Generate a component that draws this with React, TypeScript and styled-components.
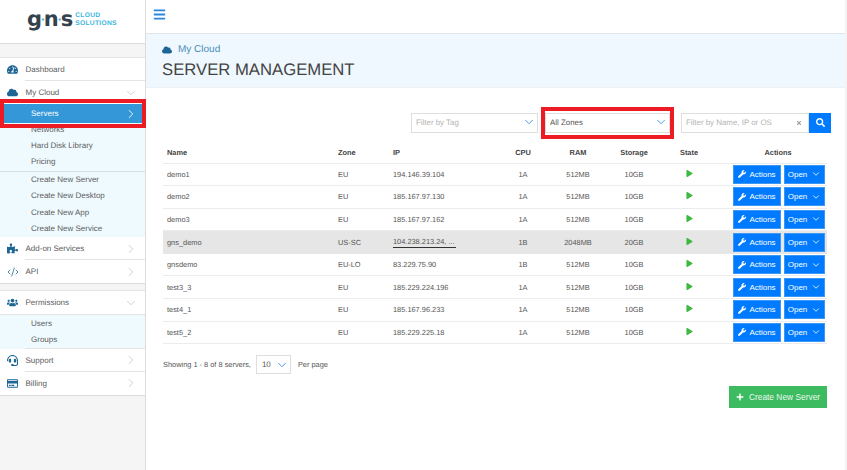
import styled, { createGlobalStyle } from "styled-components";
import { ChevronDown, ChevronRight, CodeXml } from "lucide-react";
import {
	FaBars,
	FaCloud,
	FaHeadset,
	FaPlay,
	FaPlus,
	FaPuzzlePiece,
	FaRegCreditCard,
	FaSearch,
	FaTachometerAlt,
	FaTimes,
	FaUsers,
	FaWrench,
} from "react-icons/fa";

const GlobalStyle = createGlobalStyle`
	html, body {
		margin: 0;
		padding: 0;
		background: #fff;
	}
	body {
		font-family: "Liberation Sans", Arial, sans-serif;
		color: #555;
		text-rendering: geometricPrecision;
	}
	* {
		box-sizing: border-box;
	}
`;

const Page = styled.div`
	position: relative;
	display: flex;
	width: 847px;
	height: 470px;
	overflow: hidden;
`;

const Sidebar = styled.aside`
	width: 146px;
	flex: none;
	background: #f5f5f5;
	border-right: 1px solid #dcdcdc;
`;

const LogoBar = styled.div`
	height: 44px;
	display: flex;
	align-items: center;
	padding: 0 0 4px 27px;
	gap: 3px;
	background: #fff;
	border-bottom: 1px solid #dcdcdc;
`;

const LogoMark = styled.span`
	font-family: "DejaVu Sans", sans-serif;
	font-weight: 700;
	font-size: 21px;
	line-height: 1;
	letter-spacing: -1px;
	color: #33424d;

	i {
		font-style: normal;
		font-size: 10px;
		color: #3a9dc9;
		vertical-align: 3px;
	}
`;

const LogoText = styled.span`
	font-size: 6.7px;
	line-height: 7.5px;
	font-weight: 700;
	letter-spacing: 0.3px;
	color: #3cb6de;
`;

const MenuGroup = styled.div<{ $top: number }>`
	margin-top: ${(p) => p.$top}px;
	background: #fff;
	border-top: 1px solid #e4e4e4;
	border-bottom: 1px solid #dcdcdc;
`;

const MenuItem = styled.div<{ $divider?: boolean }>`
	position: relative;
	height: 23px;
	display: flex;
	align-items: center;
	padding: 0 7px;
	font-size: 8px;
	color: #5c5c5c;

	&::before {
		content: ${(p) => (p.$divider ? '""' : "none")};
		position: absolute;
		left: 25px;
		right: 0;
		top: -1px;
		border-top: 1px solid #e4e4e4;
	}
`;

const MenuIcon = styled.span`
	width: 18.5px;
	display: flex;
	color: #1c6595;
	font-size: 11px;
`;

const MenuLabel = styled.span`
	flex: 1;
`;

const Arrow = styled.span`
	display: flex;
	color: #c8c8c8;
`;

const SubMenu = styled.div`
	background: #effaff;
	border-top: 1px solid #e4e4e4;
`;

const ActiveItem = styled.div`
	height: 19px;
	margin: -1px 3px -2px;
	padding: 0 4px 0 28px;
	display: flex;
	align-items: center;
	justify-content: space-between;
	background: #3498d8;
	color: #fff;
	font-size: 8px;
`;

const SubSection = styled.div<{ $pad: number; $divider?: boolean }>`
	padding-bottom: ${(p) => p.$pad}px;
	border-top: ${(p) => (p.$divider ? "1px solid #d8dfe3" : "none")};
`;

const SubItem = styled.div`
	height: 16.2px;
	padding-left: 31px;
	display: flex;
	align-items: center;
	font-size: 8px;
	color: #5c5c5c;
`;

const Main = styled.main`
	flex: 1;
	display: flex;
	flex-direction: column;
	border-right: 2px solid #f3f3f3;
`;

const TopBar = styled.div`
	height: 34px;
	flex: none;
	display: flex;
	align-items: center;
	padding: 0 0 4px 7px;
	color: #2a86e0;
	font-size: 13px;
	background: #fff;
	border-bottom: 1px solid #e2e4ea;
`;

const PageHeader = styled.header`
	height: 54px;
	flex: none;
	padding: 9px 16px 0;
	background: #eff8fe;
	border-bottom: 1px solid #eef1f3;
`;

const Crumb = styled.div`
	display: flex;
	align-items: center;
	gap: 6px;
	height: 13px;
	font-size: 10px;
	color: #4a8db8;

	svg {
		color: #1c6595;
		font-size: 10px;
	}
`;

const Title = styled.h1`
	margin: 5px 0 0;
	font-size: 16.7px;
	line-height: 18px;
	font-weight: 400;
	color: #444;
`;

const Content = styled.div`
	flex: 1;
	padding: 25px 0 0 17px;
`;

const Filters = styled.div`
	display: flex;
	align-items: center;
	height: 19px;
	padding-left: 248px;
`;

const SelectBox = styled.div<{ $width: number; $left?: number; $dim?: boolean }>`
	width: ${(p) => p.$width}px;
	height: 20px;
	margin-left: ${(p) => p.$left ?? 0}px;
	padding: 0 1px 1px 4px;
	display: flex;
	align-items: center;
	justify-content: space-between;
	font-size: 7.9px;
	color: ${(p) => (p.$dim ? "#b4b4b4" : "#555")};
	background: #fff;
	border: 1px solid #dedede;

	svg {
		color: #2f8fe8;
	}
`;

const SearchInput = styled.div`
	width: 128px;
	height: 20px;
	margin-left: 11px;
	padding: 0 6px 0 4px;
	display: flex;
	align-items: center;
	justify-content: space-between;
	font-size: 7.9px;
	color: #b4b4b4;
	border: 1px solid #dedede;

	svg {
		color: #999;
		font-size: 6px;
	}
`;

const SearchButton = styled.button`
	width: 22px;
	height: 20px;
	padding: 0;
	display: flex;
	align-items: center;
	justify-content: center;
	font-size: 9px;
	color: #fff;
	background: #007bff;
	border: none;
`;

const Table = styled.div`
	width: 664px;
	margin-top: 11px;
`;

const columns = "171px 55px 109px 50px 60px 52px 58px 109px";

const HeadRow = styled.div`
	display: grid;
	grid-template-columns: ${columns};
	align-items: center;
	height: 20.5px;
	padding-bottom: 1px;
	font-size: 7.4px;
	font-weight: 700;
	color: #444;
	border-bottom: 1px solid #ececec;
`;

const Row = styled.div<{ $selected?: boolean }>`
	display: grid;
	grid-template-columns: ${columns};
	align-items: center;
	height: 22.6px;
	font-size: 7.4px;
	color: #555;
	background: ${(p) => (p.$selected ? "#e6e6e6" : "#fff")};
	border-bottom: 1px solid ${(p) => (p.$selected ? "#e6e6e6" : "#ececec")};
`;

const Cell = styled.div<{ $center?: boolean; $pad?: number }>`
	padding-left: ${(p) => p.$pad ?? 0}px;
	text-align: ${(p) => (p.$center ? "center" : "left")};
`;

const IpLink = styled.span`
	display: inline-block;
	padding: 0 1px 1px 0;
	border-bottom: 1px solid #333;
`;

const StateIcon = styled.span`
	display: inline-flex;
	color: #3cb93f;
	font-size: 7px;
`;

const ActionCell = styled.div`
	padding-left: 15px;
	display: flex;
	gap: 3px;
`;

const BlueButton = styled.button<{ $width: number; $gap: number }>`
	width: ${(p) => p.$width}px;
	height: 19px;
	padding: 0;
	display: flex;
	align-items: center;
	justify-content: center;
	gap: ${(p) => p.$gap}px;
	font-family: inherit;
	font-size: 8px;
	color: #fff;
	background: #007bff;
	border: 1px solid #3d97f5;

	svg.wrench {
		font-size: 8px;
	}
`;

const Pager = styled.div`
	display: flex;
	align-items: center;
	margin-top: 11px;
	font-size: 7.4px;
	color: #555;
`;

const PerPage = styled.div`
	width: 35px;
	height: 19px;
	margin: 0 7px 0 5px;
	padding: 0 1px 0 5px;
	display: flex;
	align-items: center;
	justify-content: space-between;
	font-size: 8px;
	border: 1px solid #dedede;

	svg {
		color: #2f8fe8;
	}
`;

const CreateRow = styled.div`
	width: 664px;
	margin-top: 12px;
	display: flex;
	justify-content: flex-end;
`;

const CreateButton = styled.button`
	width: 98px;
	height: 22px;
	padding: 0;
	display: flex;
	align-items: center;
	justify-content: center;
	gap: 5px;
	font-family: inherit;
	font-size: 8.4px;
	color: #e9f9ee;
	background: #3cbb60;
	border: none;

	svg {
		font-size: 8px;
		color: #fff;
	}
`;

const RedFrame = styled.div<{ $left: number; $top: number; $width: number; $height: number }>`
	position: absolute;
	left: ${(p) => p.$left}px;
	top: ${(p) => p.$top}px;
	width: ${(p) => p.$width}px;
	height: ${(p) => p.$height}px;
	border: 4px solid #ed1c24;
	pointer-events: none;
`;

type Server = {
	name: string;
	zone: string;
	ip: string;
	cpu: string;
	ram: string;
	storage: string;
	selected?: boolean;
};

const servers: Server[] = [
	{ name: "demo1", zone: "EU", ip: "194.146.39.104", cpu: "1A", ram: "512MB", storage: "10GB" },
	{ name: "demo2", zone: "EU", ip: "185.167.97.130", cpu: "1A", ram: "512MB", storage: "10GB" },
	{ name: "demo3", zone: "EU", ip: "185.167.97.162", cpu: "1A", ram: "512MB", storage: "10GB" },
	{ name: "gns_demo", zone: "US-SC", ip: "104.238.213.24, ...", cpu: "1B", ram: "2048MB", storage: "20GB", selected: true },
	{ name: "gnsdemo", zone: "EU-LO", ip: "83.229.75.90", cpu: "1B", ram: "512MB", storage: "10GB" },
	{ name: "test3_3", zone: "EU", ip: "185.229.224.196", cpu: "1A", ram: "512MB", storage: "10GB" },
	{ name: "test4_1", zone: "EU", ip: "185.167.96.233", cpu: "1A", ram: "512MB", storage: "10GB" },
	{ name: "test5_2", zone: "EU", ip: "185.229.225.18", cpu: "1A", ram: "512MB", storage: "10GB" },
];

function App() {
	return (
		<Page>
			<GlobalStyle />
			<Sidebar>
				<LogoBar>
					<LogoMark>g<i>·</i>n<i>·</i>s</LogoMark>
					<LogoText>CLOUD<br />SOLUTIONS</LogoText>
				</LogoBar>
				<MenuGroup $top={13}>
					<MenuItem>
						<MenuIcon><FaTachometerAlt /></MenuIcon>
						<MenuLabel>Dashboard</MenuLabel>
					</MenuItem>
					<MenuItem $divider>
						<MenuIcon><FaCloud /></MenuIcon>
						<MenuLabel>My Cloud</MenuLabel>
						<Arrow><ChevronDown size={14} strokeWidth={1.5} /></Arrow>
					</MenuItem>
					<SubMenu>
						<ActiveItem>
							Servers
							<ChevronRight size={14} strokeWidth={1.5} />
						</ActiveItem>
						<SubSection $pad={1}>
							<SubItem>Networks</SubItem>
							<SubItem>Hard Disk Library</SubItem>
							<SubItem>Pricing</SubItem>
						</SubSection>
						<SubSection $pad={1} $divider>
							<SubItem>Create New Server</SubItem>
							<SubItem>Create New Desktop</SubItem>
							<SubItem>Create New App</SubItem>
							<SubItem>Create New Service</SubItem>
						</SubSection>
					</SubMenu>
					<MenuItem>
						<MenuIcon><FaPuzzlePiece /></MenuIcon>
						<MenuLabel>Add-on Services</MenuLabel>
						<Arrow><ChevronRight size={14} strokeWidth={1.5} /></Arrow>
					</MenuItem>
					<MenuItem $divider>
						<MenuIcon><CodeXml size={12} strokeWidth={1.5} /></MenuIcon>
						<MenuLabel>API</MenuLabel>
						<Arrow><ChevronRight size={14} strokeWidth={1.5} /></Arrow>
					</MenuItem>
				</MenuGroup>
				<MenuGroup $top={6}>
					<MenuItem>
						<MenuIcon><FaUsers /></MenuIcon>
						<MenuLabel>Permissions</MenuLabel>
						<Arrow><ChevronDown size={14} strokeWidth={1.5} /></Arrow>
					</MenuItem>
					<SubMenu>
						<SubSection $pad={1}>
							<SubItem>Users</SubItem>
							<SubItem>Groups</SubItem>
						</SubSection>
					</SubMenu>
					<MenuItem $divider>
						<MenuIcon><FaHeadset /></MenuIcon>
						<MenuLabel>Support</MenuLabel>
						<Arrow><ChevronRight size={14} strokeWidth={1.5} /></Arrow>
					</MenuItem>
					<MenuItem $divider>
						<MenuIcon><FaRegCreditCard /></MenuIcon>
						<MenuLabel>Billing</MenuLabel>
						<Arrow><ChevronRight size={14} strokeWidth={1.5} /></Arrow>
					</MenuItem>
				</MenuGroup>
			</Sidebar>
			<Main>
				<TopBar><FaBars /></TopBar>
				<PageHeader>
					<Crumb><FaCloud />My Cloud</Crumb>
					<Title>SERVER MANAGEMENT</Title>
				</PageHeader>
				<Content>
					<Filters>
						<SelectBox $width={127} $dim>
							Filter by Tag
							<ChevronDown size={14} strokeWidth={1.5} />
						</SelectBox>
						<SelectBox $width={125} $left={7}>
							All Zones
							<ChevronDown size={14} strokeWidth={1.5} />
						</SelectBox>
						<SearchInput>
							Filter by Name, IP or OS
							<FaTimes />
						</SearchInput>
						<SearchButton><FaSearch /></SearchButton>
					</Filters>
					<Table>
						<HeadRow>
							<Cell $pad={4}>Name</Cell>
							<Cell $pad={4}>Zone</Cell>
							<Cell $pad={4}>IP</Cell>
							<Cell $center>CPU</Cell>
							<Cell $center>RAM</Cell>
							<Cell $center>Storage</Cell>
							<Cell $center>State</Cell>
							<Cell $center $pad={11}>Actions</Cell>
						</HeadRow>
						{servers.map((server) => (
							<Row key={server.name} $selected={server.selected}>
								<Cell $pad={4}>{server.name}</Cell>
								<Cell $pad={4}>{server.zone}</Cell>
								<Cell $pad={4}>
									{server.selected ? <IpLink>{server.ip}</IpLink> : server.ip}
								</Cell>
								<Cell $center>{server.cpu}</Cell>
								<Cell $center>{server.ram}</Cell>
								<Cell $center>{server.storage}</Cell>
								<Cell $center><StateIcon><FaPlay /></StateIcon></Cell>
								<ActionCell>
									<BlueButton $width={48} $gap={3}><FaWrench className="wrench" />Actions</BlueButton>
									<BlueButton $width={41} $gap={4}>Open<ChevronDown size={10} /></BlueButton>
								</ActionCell>
							</Row>
						))}
					</Table>
					<Pager>
						Showing 1 - 8 of 8 servers,
						<PerPage>10<ChevronDown size={14} strokeWidth={1.5} /></PerPage>
						Per page
					</Pager>
					<CreateRow>
						<CreateButton><FaPlus />Create New Server</CreateButton>
					</CreateRow>
				</Content>
			</Main>
			<RedFrame $left={0} $top={99} $width={146} $height={29} />
			<RedFrame $left={541} $top={107} $width={133} $height={32} />
		</Page>
	);
}

export default App;
